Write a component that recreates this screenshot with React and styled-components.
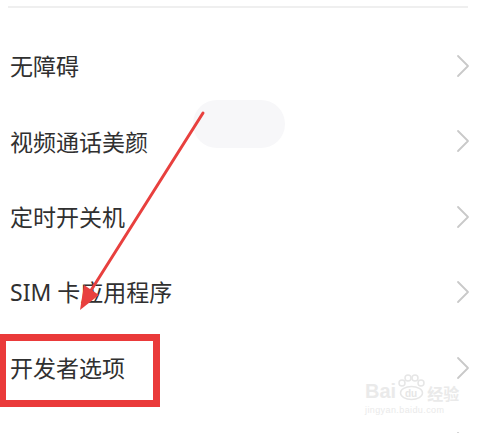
import React from 'react';
import styled, { createGlobalStyle } from 'styled-components';

const GlobalStyle = createGlobalStyle`
  html, body {
    margin: 0;
    padding: 0;
    background: #ffffff;
  }
  body {
    font-family: "Noto Sans CJK SC", "Noto Sans", sans-serif;
  }
`;

const Screen = styled.div`
  position: relative;
  width: 482px;
  height: 433px;
  overflow: hidden;
  background: #ffffff;
`;

const Divider = styled.div`
  margin: 6px 14px 0 8px;
  height: 2px;
  background: #efefef;
`;

const List = styled.div`
  display: flex;
  flex-direction: column;
  padding: 20px 14px 0 10px;
`;

const Row = styled.div`
  display: flex;
  align-items: center;
  justify-content: space-between;
  height: 75.5px;
`;

const Label = styled.span`
  font-size: 23px;
  line-height: 1;
  color: #303030;
  font-family: ${(p) => (p.$latin ? '"Noto Sans", "Noto Sans CJK SC", sans-serif' : '"Noto Sans CJK SC", sans-serif')};
`;

const Chevron = styled.svg`
  width: 14px;
  height: 24px;
  flex-shrink: 0;
  margin-right: -2px;
`;

const Toast = styled.div`
  position: absolute;
  left: 193px;
  top: 100px;
  width: 92px;
  height: 48px;
  border-radius: 24px;
  background: #f7f7f9;
`;

const Highlight = styled.div`
  position: absolute;
  left: -1px;
  top: 334px;
  width: 161px;
  height: 73px;
  box-sizing: border-box;
  border: 7px solid #ea3a3a;
`;

const ArrowLayer = styled.svg`
  position: absolute;
  left: 0;
  top: 0;
  width: 482px;
  height: 433px;
  pointer-events: none;
`;

const Watermark = styled.div`
  position: absolute;
  left: 365px;
  top: 374px;
  display: flex;
  flex-direction: column;
  align-items: flex-start;
  color: #eaeaea;
  font-family: "Liberation Sans", sans-serif;
`;

const MarkTop = styled.div`
  display: flex;
  align-items: flex-end;
  font-size: 20px;
  font-weight: bold;
  line-height: 1;
  span.cn {
    font-family: "Noto Sans CJK SC", sans-serif;
    font-size: 16px;
    margin-left: 1px;
  }
`;

const MarkUrl = styled.div`
  font-size: 9px;
  margin-top: 4px;
  letter-spacing: 0.4px;
`;

const items = [
  { label: '无障碍' },
  { label: '视频通话美颜' },
  { label: '定时开关机' },
  { label: 'SIM 卡应用程序', latin: true },
  { label: '开发者选项' },
  { label: '更多设置' },
];

function ChevronIcon() {
  return (
    <Chevron viewBox="0 0 14 24">
      <path d="M2 2 L12 12 L2 22" fill="none" stroke="#c9c9c9" strokeWidth="1.8" strokeLinecap="round" strokeLinejoin="round" />
    </Chevron>
  );
}

function App() {
  return (
    <>
      <GlobalStyle />
      <Screen>
        <Divider />
        <List>
          {items.map((item) => (
            <Row key={item.label}>
              <Label $latin={item.latin}>{item.label}</Label>
              <ChevronIcon />
            </Row>
          ))}
        </List>

        <Toast />

        <Watermark>
          <MarkTop>
            <span>Bai</span>
            <svg width="30" height="27" viewBox="0 0 30 27">
              <g fill="none" stroke="#e6e6e6" strokeWidth="1.5">
                <circle cx="6" cy="9" r="3" />
                <circle cx="12" cy="4" r="3" />
                <circle cx="19" cy="4" r="3" />
                <circle cx="25" cy="9" r="3" />
                <ellipse cx="15.5" cy="19" rx="11" ry="6.5" />
              </g>
              <text x="9" y="23" fontSize="10" fontWeight="bold" fill="#e6e6e6" fontFamily="Liberation Sans, sans-serif">du</text>
            </svg>
            <span className="cn">经验</span>
          </MarkTop>
          <MarkUrl>jingyan.baidu.com</MarkUrl>
        </Watermark>

        <Highlight />

        <ArrowLayer viewBox="0 0 482 433">
          <line x1="203" y1="113" x2="90" y2="292" stroke="#e8403e" strokeWidth="3" strokeLinecap="round" />
          <polygon points="80,310 99,295 84,285" fill="#e8403e" />
        </ArrowLayer>
      </Screen>
    </>
  );
}

export default App;
